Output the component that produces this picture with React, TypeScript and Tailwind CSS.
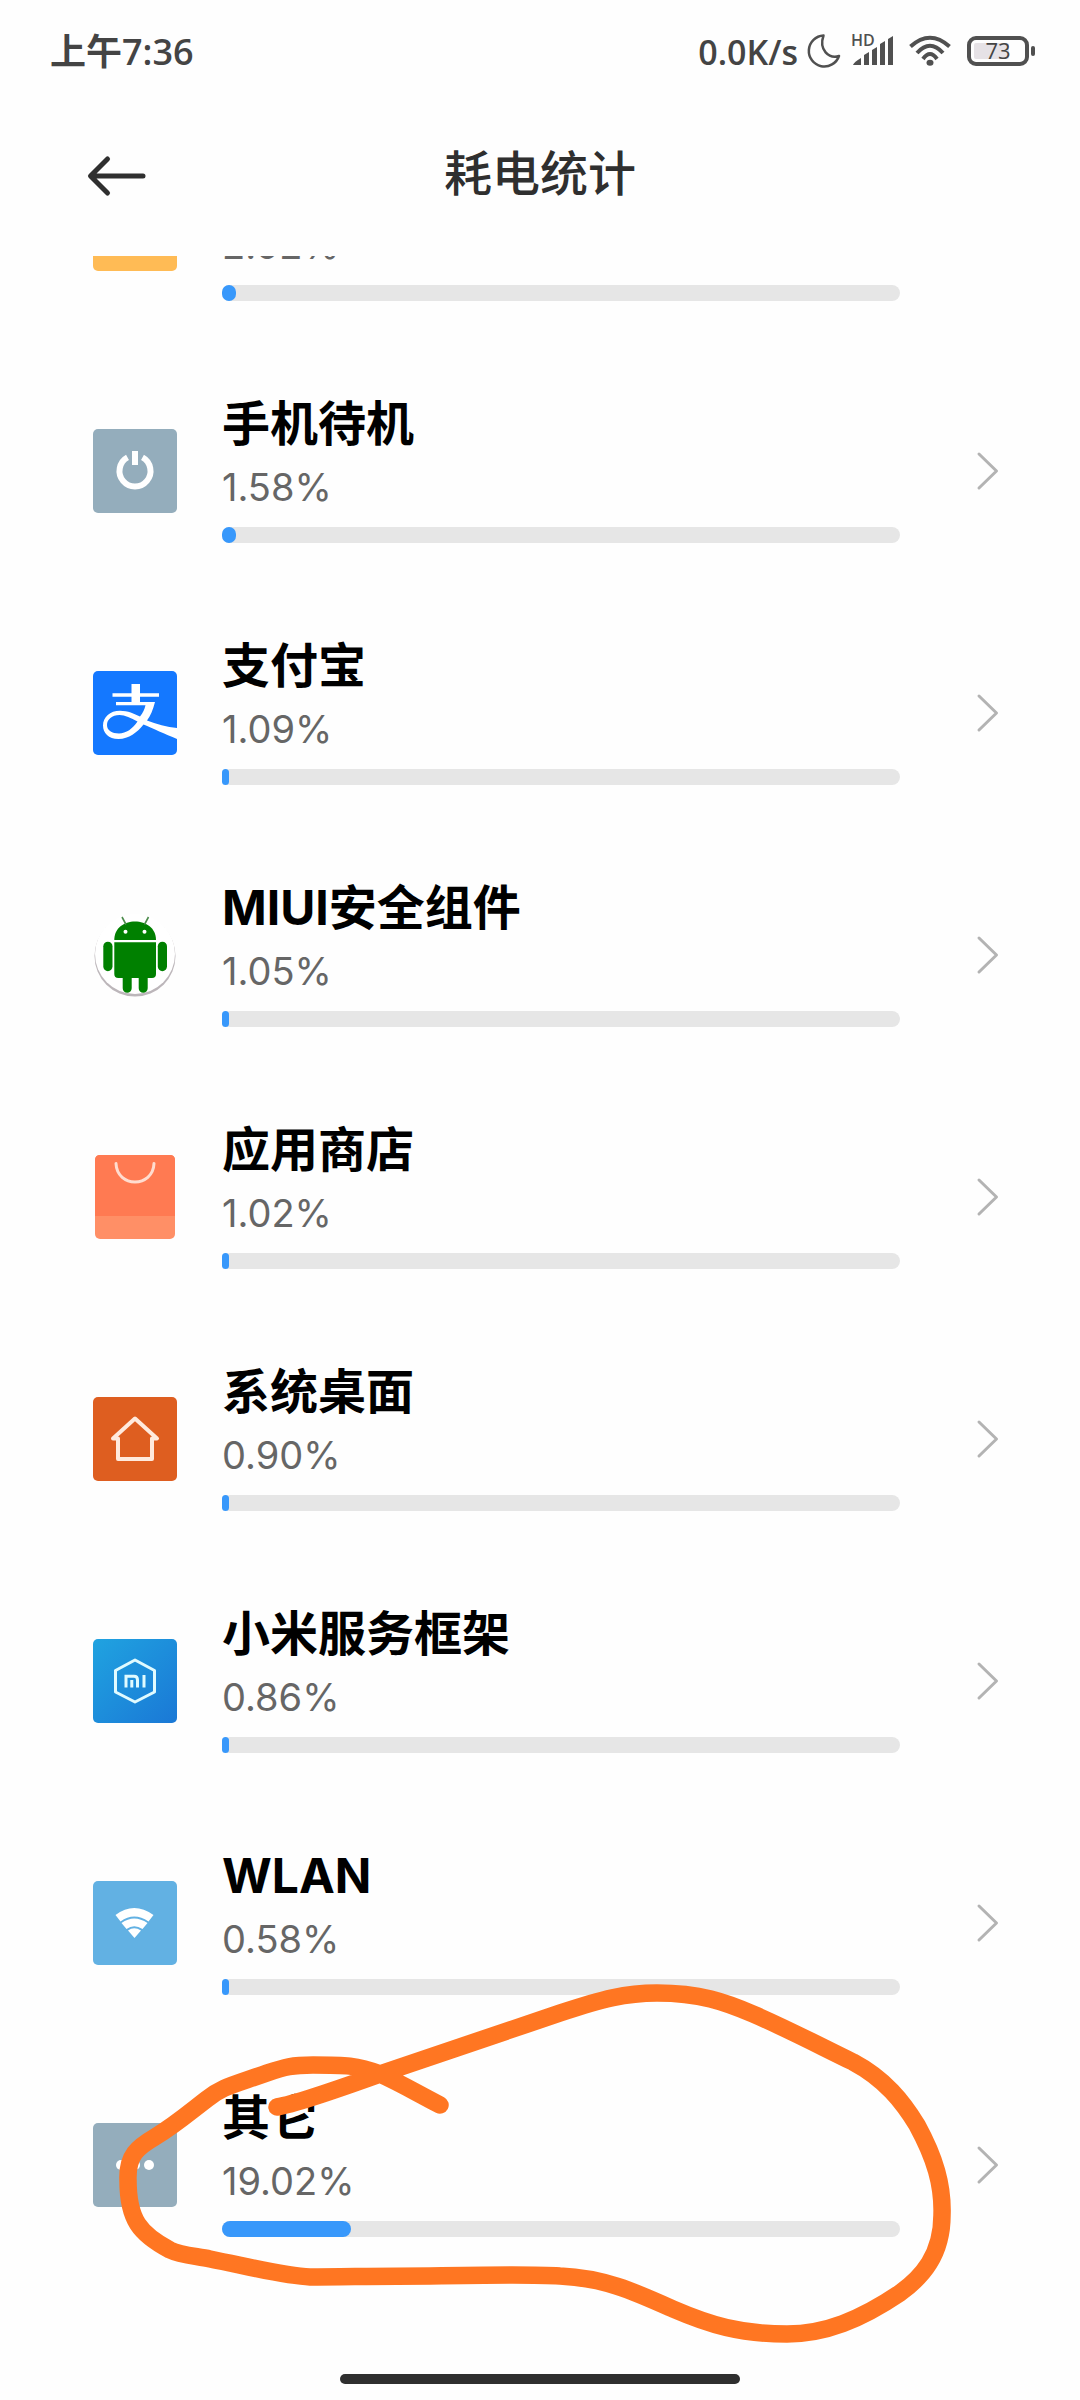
import type { ReactNode } from "react";

type UsageItem = {
  id: string;
  name?: string;
  percent: number;
  icon: ReactNode;
};

const usageItems: UsageItem[] = [
  { id: "system", percent: 2.02, icon: <ColorIcon /> },
  { id: "standby", name: "手机待机", percent: 1.58, icon: <StandbyIcon /> },
  { id: "alipay", name: "支付宝", percent: 1.09, icon: <AlipayIcon /> },
  { id: "security", name: "MIUI安全组件", percent: 1.05, icon: <AndroidIcon /> },
  { id: "store", name: "应用商店", percent: 1.02, icon: <StoreIcon /> },
  { id: "launcher", name: "系统桌面", percent: 0.9, icon: <HomeIcon /> },
  { id: "framework", name: "小米服务框架", percent: 0.86, icon: <MiIcon /> },
  { id: "wlan", name: "WLAN", percent: 0.58, icon: <WlanIcon /> },
  { id: "other", name: "其它", percent: 19.02, icon: <MoreIcon /> },
];

function ColorIcon() {
  return (
    <svg viewBox="0 0 84 84" className="size-full">
      <rect width="84" height="84" rx="5" fill="#ffbb55" />
    </svg>
  );
}

function StandbyIcon() {
  return (
    <svg viewBox="0 0 84 84" className="size-full">
      <rect width="84" height="84" rx="5" fill="#94adbc" />
      <path d="M34.5 28.4A15.5 15.5 0 1 0 49.5 28.4" fill="none" stroke="#fff" strokeWidth="6" />
      <path d="M42 22V36" stroke="#fff" strokeWidth="6" />
    </svg>
  );
}

function AlipayIcon() {
  return (
    <svg viewBox="0 0 84 84" className="size-full">
      <rect width="84" height="84" rx="5" fill="#1478ff" />
      <path
        fill="#fff"
        d="M38.5 13H47V22.2H66V25.700H47V31H62C60 39 57.500 44.500 54 49.500C63 53 74 56 84 57V68C72 63 60 57.500 50.500 53.500C44 61.500 36 68 25.500 68C15.500 68 10 62 10 54.500C10 46 17 39.700 27 39.700C35 39.700 41 42.500 47 45.500C50 42 51.500 38 52.500 34.200H23V31H38.500V25.700H19.500V22.200H38.500ZM44.500 50.500C38 47 32 44 26.500 44C19 44 14 48.500 14 54C14 59.500 19 62.500 26 62.500C33 62.500 40 57.500 44.500 50.500Z"
      />
    </svg>
  );
}

function AndroidIcon() {
  return (
    <svg viewBox="0 0 84 84" className="size-full">
      <circle cx="42" cy="43" r="40.500" fill="#bcb6ba" />
      <circle cx="42" cy="41" r="40" fill="#fff" />
      <g fill="#008000">
        <path d="M21.300 27C21.300 15 31 8.500 42 8.500S63 15 63 27Z" />
        <path d="M21.300 29.300H63V61Q63 65 59 65H54.700V75.200A4.500 4.500 0 0 1 45.700 75.200V65H38.700V75.200A4.500 4.500 0 0 1 29.700 75.200V65H25.300Q21.300 65 21.300 61Z" />
        <rect x="10.300" y="28.700" width="9.200" height="29.500" rx="4.600" />
        <rect x="64.800" y="28.700" width="9.200" height="29.500" rx="4.600" />
      </g>
      <path d="M29 4L33 11.500M55.500 4L51.500 11.500" stroke="#4c8c4c" strokeWidth="1.600" />
      <circle cx="32.500" cy="18.700" r="2" fill="#fff" />
      <circle cx="51.500" cy="18.700" r="2" fill="#fff" />
    </svg>
  );
}

function StoreIcon() {
  return (
    <svg viewBox="0 0 84 84" className="size-full">
      <rect x="2" width="80" height="84" rx="5" fill="#ff8f66" />
      <path d="M2 61V5Q2 0 7 0H77Q82 0 82 5V61Z" fill="#ff7a52" />
      <path d="M23 8.500C24 33 60 33 61 8.500" fill="none" stroke="#ffdccf" strokeWidth="3" strokeLinecap="round" />
    </svg>
  );
}

function HomeIcon() {
  return (
    <svg viewBox="0 0 84 84" className="size-full">
      <rect width="84" height="84" rx="5" fill="#de5e20" />
      <path d="M20 41.500L42 21.500L64 41.500H59V62H25V41.500Z" fill="none" stroke="#ffeadd" strokeWidth="4" strokeLinejoin="round" />
    </svg>
  );
}

function MiIcon() {
  return (
    <svg viewBox="0 0 84 84" className="size-full">
      <defs>
        <linearGradient id="mi-bg" x1="0" y1="0" x2="1" y2="1">
          <stop offset="0" stopColor="#20a3e0" />
          <stop offset="1" stopColor="#1a78d6" />
        </linearGradient>
      </defs>
      <rect width="84" height="84" rx="5" fill="url(#mi-bg)" />
      <g fill="none" stroke="#e0fbff" strokeWidth="3">
        <path d="M42 21L61.500 31.500V53L42 63L22.500 53V31.500Z" strokeLinejoin="round" />
        <path d="M33 48.500V37.300H41Q44.500 37.300 44.500 41V48.500M38.800 41V48.500M51 36V48.500" />
      </g>
    </svg>
  );
}

function WlanIcon() {
  return (
    <svg viewBox="0 0 84 84" className="size-full">
      <rect width="84" height="84" rx="5" fill="#62b1e3" />
      <g fill="#fff">
        <path d="M22.500 34Q41 20 60.500 34L55.500 40.500Q41 30.500 27.500 40.500Z" />
        <path d="M28.500 42Q41 33 54.500 42L49.500 48Q41 42.500 33.500 48Z" />
        <path d="M35 49.500Q41 45 48 49.500L41.500 57Z" />
      </g>
    </svg>
  );
}

function MoreIcon() {
  return (
    <svg viewBox="0 0 84 84" className="size-full">
      <rect width="84" height="84" rx="5" fill="#94adbc" />
      <g fill="#fff">
        <circle cx="28" cy="42" r="5" />
        <circle cx="42" cy="42" r="5" />
        <circle cx="56" cy="42" r="5" />
      </g>
    </svg>
  );
}

function StatusBar() {
  return (
    <div className="flex h-[104px] items-center justify-between pr-11 pl-[50px] font-['Open_Sans','Noto_Sans_CJK_SC',sans-serif] font-semibold text-[#444444]">
      <span className="text-4xl leading-10">上午7:36</span>
      <div className="flex items-center">
        <span className="text-[34px] leading-10">0.0K/s</span>
        <svg viewBox="0 0 36 36" className="ml-2 size-9" fill="none" stroke="#505050" strokeWidth="2.500" strokeLinejoin="round">
          <path d="M17.500 1.500A15.500 15.500 0 1 0 33 22C23 25 12.500 16 17.500 1.500Z" />
        </svg>
        <svg viewBox="0 0 44 36" className="ml-2 h-9 w-11 overflow-visible" fill="#505050">
          <text x="1" y="12" fontSize="16">HD</text>
          <path d="M3 31Q4 28 11 24V31ZM14 31V21L19 18V31ZM22 31V16L27 13V31ZM30 31V10L35 7V31ZM38 31V5L43 2V31Z" />
        </svg>
        <svg viewBox="0 0 48 36" className="ml-3 h-9 w-12" fill="none" stroke="#505050" strokeWidth="4">
          <path d="M4.500 12.500Q24 -5 43.500 12.500M11 19Q24 4.500 37 19M17 25Q24 15 31 25" />
          <ellipse cx="24" cy="28.700" rx="3.500" ry="3" fill="#505050" stroke="none" />
        </svg>
        <svg viewBox="0 0 70 36" className="ml-3 h-9 w-[70px] overflow-visible">
          <rect x="3" y="4" width="58" height="26" rx="7" fill="none" stroke="#505050" strokeWidth="4" />
          <rect x="8" y="9" width="35" height="16" rx="2" fill="#e6e2e6" />
          <rect x="65" y="12" width="4" height="10" rx="2" fill="#505050" />
          <text x="32" y="25" fontSize="22" fontWeight="500" textAnchor="middle" fill="#444444">73</text>
        </svg>
      </div>
    </div>
  );
}

function UsageRow({ name, percent, icon }: UsageItem) {
  const rounded = Math.round(percent);

  return (
    <li>
      <a href="#" className="flex items-center py-[41px] pr-20 pl-[93px]">
        <div className="size-[84px] shrink-0">{icon}</div>
        <div className="ml-[45px] flex-1 pb-2">
          <p className="h-[66px] text-5xl leading-[66px] font-bold text-black">{name}</p>
          <p className="mt-0.5 text-[38px] leading-[56px] text-[#666666]">{percent.toFixed(2)}%</p>
          <div className="mt-3 h-4 rounded-full bg-[#e6e6e6]">
            <div className="h-full rounded-full bg-[#3898fb]" style={{ width: `${rounded}%` }} />
          </div>
        </div>
        <svg viewBox="0 0 24 40" className="ml-[76px] h-10 w-6 shrink-0" fill="none" stroke="#b3b3b3" strokeWidth="3" strokeLinecap="round" strokeLinejoin="round">
          <path d="M3 3L20.500 20L3 37" />
        </svg>
      </a>
    </li>
  );
}

function MarkerStroke() {
  return (
    <svg
      viewBox="110 1970 850 390"
      className="pointer-events-none absolute -bottom-[74px] left-[110px] h-[390px] w-[850px]"
      fill="none"
      stroke="#ff7622"
      strokeWidth="17.500"
      strokeLinecap="round"
      strokeLinejoin="round"
    >
      <path d="M277 2107C295 2104 330 2092 380 2074L560 2013C603 1999 625 1993 657 1993C700 1993 725 2002 753 2014C790 2030 820 2046 853 2062C885 2079 903 2102 917 2125C935 2158 943 2185 942 2215C942 2255 922 2277 900 2293C860 2320 825 2334 787 2334C740 2334 710 2325 673 2309C635 2292 605 2278 560 2276C530 2274 480 2275 430 2276C380 2276 340 2277 310 2277C285 2276 250 2267 210 2259C195 2256 180 2255 170 2250C140 2234 128 2220 128 2180C127 2155 138 2147 155 2137C175 2125 190 2112 207 2099C222 2087 230 2086 267 2073C285 2067 292 2065 313 2065C345 2065 357 2065 380 2074C400 2083 415 2092 440 2105" />
    </svg>
  );
}

export default function App() {
  return (
    <div className="flex min-h-screen flex-col bg-[#fefefe] font-['Inter','Noto_Sans_CJK_SC',sans-serif]">
      <StatusBar />

      <header className="grid h-[152px] grid-cols-[1fr_auto_1fr] items-center px-[84px] pb-3 text-[#2f2f2f]">
        <button type="button" aria-label="返回" className="w-16">
          <svg viewBox="0 0 64 48" className="h-12 w-16" fill="none" stroke="#2f2f2f" strokeWidth="5" strokeLinecap="round" strokeLinejoin="round">
            <path d="M59 26H7M23.500 9L6.500 26L23.500 43" />
          </svg>
        </button>
        <h1 className="text-5xl leading-[64px] font-medium">耗电统计</h1>
      </header>

      <main className="overflow-hidden">
        <div className="relative -mt-[148px]">
          <ul>
            {usageItems.map((item) => (
              <UsageRow key={item.id} {...item} />
            ))}
          </ul>
          <MarkerStroke />
        </div>
        <div className="flex h-[114px] items-end justify-center pb-4">
          <div className="h-[10px] w-[400px] rounded-full bg-[#2f2f2f]" />
        </div>
      </main>
    </div>
  );
}
